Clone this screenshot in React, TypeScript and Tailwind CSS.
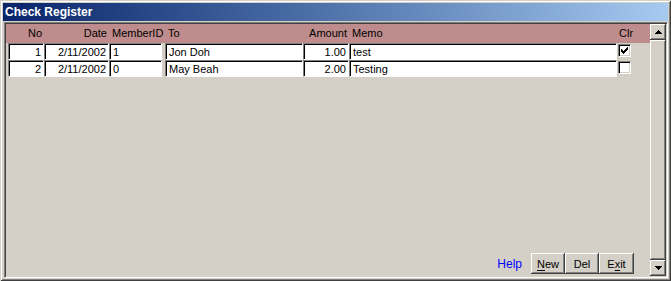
import React from "react";

const raised =
  "bg-[#d4d0c8] shadow-[inset_-1px_-1px_0_#404040,inset_1px_1px_0_#ffffff,inset_-2px_-2px_0_#808080,inset_2px_2px_0_#d4d0c8]";

function Cell({ className, right, children }: { className: string; right?: boolean; children?: React.ReactNode }) {
  return (
    <div
      className={
        "h-full bg-white border-t border-l border-t-[#808080] border-l-[#808080] border-b border-r border-b-white border-r-white shadow-[inset_1px_1px_0_#000000] flex items-center leading-none whitespace-nowrap overflow-hidden " +
        (right ? "justify-end pr-[2px] " : "pl-[3px] ") +
        className
      }
    >
      <span className="pt-[1px]">{children}</span>
    </div>
  );
}

function Check({ checked }: { checked: boolean }) {
  return (
    <div className="ml-[1px] mt-[1px] w-[13px] h-[13px] bg-white border-t border-l border-t-[#808080] border-l-[#808080] border-b border-r border-b-white border-r-white shadow-[inset_1px_1px_0_#000000,inset_-1px_-1px_0_#d4d0c8] flex items-center justify-center">
      {checked && (
        <svg width="7" height="7" viewBox="0 0 7 7" className="block">
          <path d="M0 2h1v1h1v1h1V3h1V2h1V1h1V0h1v3H6v1H5v1H4v1H3v1H2V6H1V5H0z" fill="#000" />
        </svg>
      )}
    </div>
  );
}

function Row({ no, date, member, to, amount, memo, clr }: { no: string; date: string; member: string; to: string; amount: string; memo: string; clr: boolean }) {
  return (
    <div className="flex h-[17px] pl-[2px]">
      <Cell className="w-[36px]" right>{no}</Cell>
      <Cell className="w-[65px]" right>{date}</Cell>
      <Cell className="w-[53px]">{member}</Cell>
      <div className="w-[3px]" />
      <Cell className="w-[138px]">{to}</Cell>
      <Cell className="w-[46px]" right>{amount}</Cell>
      <Cell className="w-[268px]">{memo}</Cell>
      <Check checked={clr} />
    </div>
  );
}

function Btn({ className, children }: { className: string; children: React.ReactNode }) {
  return (
    <div className={raised + " h-[21px] flex items-center justify-center " + className}>
      <span className="pt-[1px]">{children}</span>
    </div>
  );
}

export default function App() {
  return (
    <div className="w-[671px] h-[281px] bg-[#d4d0c8] p-[3px] flex flex-col font-['Liberation_Sans',Arial,sans-serif] text-[11px] text-black shadow-[inset_1px_1px_0_#d4d0c8,inset_-1px_-1px_0_#404040,inset_2px_2px_0_#ffffff,inset_-2px_-2px_0_#808080]">
      <div className="h-[18px] bg-linear-to-r from-[#0a246a] to-[#a6caf0] flex items-center pl-[2px]">
        <span className="text-white font-bold text-[12px] leading-none">Check Register</span>
      </div>
      <div className="mt-[1px] ml-[1px] flex-1 flex min-h-0 p-[1px] border-t border-l border-t-[#808080] border-l-[#808080] border-b border-r border-b-white border-r-white shadow-[inset_1px_1px_0_#404040,inset_-1px_-1px_0_#d4d0c8]">
        <div className="flex-1 flex flex-col">
          <div className="h-[19px] bg-[#be8c8c] flex items-center pl-[2px] leading-none">
            <div className="w-[36px] text-right pr-[2px]">No</div>
            <div className="w-[65px] text-right pr-[2px]">Date</div>
            <div className="w-[53px] pl-[3px]">MemberID</div>
            <div className="w-[3px]" />
            <div className="w-[138px] pl-[3px]">To</div>
            <div className="w-[46px] text-right pr-[2px]">Amount</div>
            <div className="w-[268px] pl-[3px]">Memo</div>
            <div className="pl-[2px]">Clr</div>
          </div>
          <Row no="1" date="2/11/2002" member="1" to="Jon Doh" amount="1.00" memo="test" clr={true} />
          <Row no="2" date="2/11/2002" member="0" to="May Beah" amount="2.00" memo="Testing" clr={false} />
          <div className="flex-1" />
          <div className="flex items-center justify-end pr-[16px] pb-[2px]">
            <span className="text-[#0000ff] text-[12px] mr-[9px]">Help</span>
            <Btn className="w-[34px]">
              <span className="underline underline-offset-2">N</span>ew
            </Btn>
            <Btn className="w-[34px]">Del</Btn>
            <Btn className="w-[35px]">
              E<span className="underline underline-offset-2">x</span>it
            </Btn>
          </div>
        </div>
        <div className="w-[16px] flex flex-col">
          <div className={raised + " h-[16px] flex items-center justify-center"}>
            <svg width="7" height="4" viewBox="0 0 7 4" className="block">
              <path d="M3 0h1v1h1v1h1v1h1v1H0V3h1V2h1V1h1z" fill="#000" />
            </svg>
          </div>
          <div className={raised + " flex-1"} />
          <div className={raised + " h-[16px] flex items-center justify-center"}>
            <svg width="7" height="4" viewBox="0 0 7 4" className="block">
              <path d="M0 0h7v1H6v1H5v1H4v1H3V3H2V2H1V1H0z" fill="#000" />
            </svg>
          </div>
        </div>
      </div>
    </div>
  );
}
